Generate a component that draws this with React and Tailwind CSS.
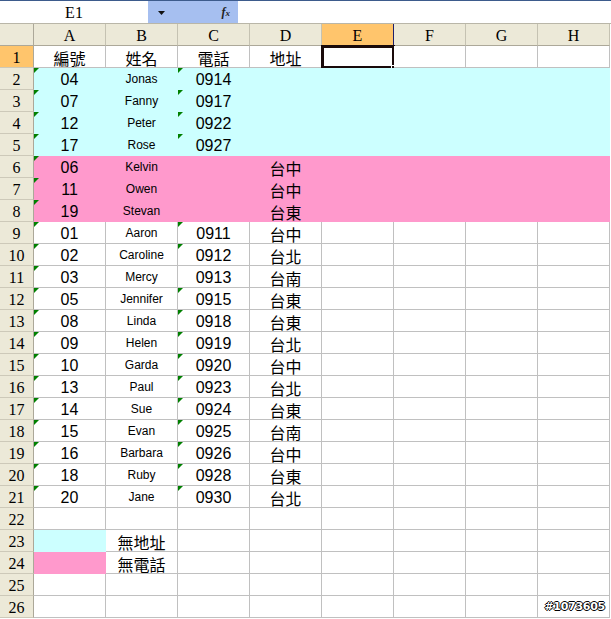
import React from 'react';

// Excel XP style sheet: cyan = 無地址, pink = 無電話
const COLS = ['A', 'B', 'C', 'D', 'E', 'F', 'G', 'H'];

const DATA = [
    { id: '04', name: 'Jonas', tel: '0914', fill: 'cyan' },
    { id: '07', name: 'Fanny', tel: '0917', fill: 'cyan' },
    { id: '12', name: 'Peter', tel: '0922', fill: 'cyan' },
    { id: '17', name: 'Rose', tel: '0927', fill: 'cyan' },
    { id: '06', name: 'Kelvin', addr: '台中', fill: 'pink' },
    { id: '11', name: 'Owen', addr: '台中', fill: 'pink' },
    { id: '19', name: 'Stevan', addr: '台東', fill: 'pink' },
    { id: '01', name: 'Aaron', tel: '0911', addr: '台中' },
    { id: '02', name: 'Caroline', tel: '0912', addr: '台北' },
    { id: '03', name: 'Mercy', tel: '0913', addr: '台南', noFlag: true },
    { id: '05', name: 'Jennifer', tel: '0915', addr: '台東' },
    { id: '08', name: 'Linda', tel: '0918', addr: '台東' },
    { id: '09', name: 'Helen', tel: '0919', addr: '台北' },
    { id: '10', name: 'Garda', tel: '0920', addr: '台中' },
    { id: '13', name: 'Paul', tel: '0923', addr: '台北' },
    { id: '14', name: 'Sue', tel: '0924', addr: '台東' },
    { id: '15', name: 'Evan', tel: '0925', addr: '台南' },
    { id: '16', name: 'Barbara', tel: '0926', addr: '台中' },
    { id: '18', name: 'Ruby', tel: '0928', addr: '台東' },
    { id: '20', name: 'Jane', tel: '0930', addr: '台北' },
];

const MING = { fontFamily: '"Liberation Serif", "Noto Sans CJK TC", serif' };

const FILLS = {
    cyan: 'bg-[#ccffff] border-transparent',
    pink: 'bg-[#ff99cc] border-transparent',
};

const Flag = () => (
    <span className="absolute left-0 top-0 h-0 w-0 border-t-[5px] border-r-[5px] border-t-[#008000] border-r-transparent" />
);

const Cell = ({ fill, flag, kind = 'num', children, selected }) => (
    <div
        className={`relative flex h-[22px] items-center justify-center border-r border-b box-border ${fill ? FILLS[fill] : 'bg-white border-[#c0c0c0]'}`}
    >
        {flag && <Flag />}
        {kind === 'name' ? (
            <span className="pt-px text-[12px] text-black" style={{ fontFamily: '"Liberation Sans", Arial, sans-serif' }}>
                {children}
            </span>
        ) : kind === 'cjk' ? (
            <span className="pt-[3px] text-[16px] leading-none text-black" style={{ fontFamily: '"Noto Sans CJK TC", serif' }}>
                {children}
            </span>
        ) : (
            <span className="pt-[3px] text-[16px] leading-none text-black" style={{ fontFamily: '"Liberation Sans", sans-serif', fontWeight: 300 }}>
                {children}
            </span>
        )}
        {selected && (
            <div className="absolute -left-px -top-px h-[24px] w-[74px] border-[3px] border-[#1a0a0a]">
                <span className="absolute -right-[4px] -bottom-[4px] h-[5px] w-[5px] bg-[#1a0a0a] border border-white" />
            </div>
        )}
    </div>
);

const RowHead = ({ n, active }) => (
    <div
        className={`flex h-[22px] items-center justify-center border-r border-b box-border border-r-[#aca899] border-b-[#cdc9b9] pt-[3px] text-[16px] text-black ${active ? 'bg-[#ffc56c]' : 'bg-[#ece9d8]'}`}
        style={MING}
    >
        {n}
    </div>
);

export default function App() {
    const rows = [];

    // row 1 headers
    rows.push(
        <React.Fragment key="r1">
            <RowHead n={1} active />
            <Cell kind="cjk">編號</Cell>
            <Cell kind="cjk">姓名</Cell>
            <Cell kind="cjk">電話</Cell>
            <Cell kind="cjk">地址</Cell>
            <Cell selected />
            <Cell />
            <Cell />
            <Cell />
        </React.Fragment>
    );

    DATA.forEach((d, i) => {
        rows.push(
            <React.Fragment key={d.id}>
                <RowHead n={i + 2} />
                <Cell fill={d.fill} flag>{d.id}</Cell>
                <Cell fill={d.fill} kind="name">{d.name}</Cell>
                <Cell fill={d.fill} flag={!!d.tel && !d.noFlag}>{d.tel}</Cell>
                <Cell fill={d.fill} kind="cjk">{d.addr}</Cell>
                <Cell fill={d.fill} />
                <Cell fill={d.fill} />
                <Cell fill={d.fill} />
                <Cell fill={d.fill} />
            </React.Fragment>
        );
    });

    [22, 23, 24, 25, 26].forEach((n) => {
        const fill = n === 23 ? 'cyan' : n === 24 ? 'pink' : null;
        const label = n === 23 ? '無地址' : n === 24 ? '無電話' : null;
        rows.push(
            <React.Fragment key={n}>
                <RowHead n={n} />
                <Cell fill={fill} />
                <Cell kind="cjk">{label}</Cell>
                {COLS.slice(2).map((c) => <Cell key={c} />)}
            </React.Fragment>
        );
    });

    return (
        <div className="relative h-[619px] w-[611px] overflow-hidden bg-white">
            {/* Formula bar */}
            <div className="flex h-[24px] border-t border-t-[#3d5b8c] border-b border-b-[#b9b6a8]">
                <div className="flex w-[148px] items-center justify-center bg-white pt-[2px] text-[16px] text-black" style={MING}>
                    E1
                </div>
                <div className="flex w-[90px] items-center bg-[#a6bff0]">
                    <svg width="30" height="21" viewBox="0 0 30 21" className="shrink-0">
                        <path d="M10 9 h7 l-3.5 4 z" fill="#111" />
                    </svg>
                    <span className="ml-auto mr-[8px] text-[12px] italic font-bold text-[#222]" style={{ fontFamily: '"Liberation Serif", serif' }}>
                        f<span className="text-[9px]">x</span>
                    </span>
                </div>
                <div className="flex-1 bg-white" />
            </div>

            {/* Sheet */}
            <div className="grid grid-cols-[34px_repeat(8,72px)]">
                <div className="h-[22px] border-r border-b box-border border-r-[#aca899] border-b-[#aca899] bg-[#ece9d8]" />
                {COLS.map((c) => (
                    <div
                        key={c}
                        className={`flex h-[22px] items-center justify-center border-r border-b box-border pt-[2px] text-[16px] text-black ${c === 'E' ? 'bg-[#ffc56c] border-r-[#1f1f6b] border-b-[#aca899]' : 'bg-[#ece9d8] border-r-[#c5c2b2] border-b-[#aca899]'}`}
                        style={MING}
                    >
                        {c}
                    </div>
                ))}
                {rows}
            </div>

            <span
                className="absolute right-[6px] bottom-[4px] text-[11px] font-bold tracking-tight text-white [text-shadow:1px_0_#000,-1px_0_#000,0_1px_#000,0_-1px_#000]"
                style={{ fontFamily: '"DejaVu Sans", sans-serif' }}
            >
                #1073605
            </span>
        </div>
    );
}
